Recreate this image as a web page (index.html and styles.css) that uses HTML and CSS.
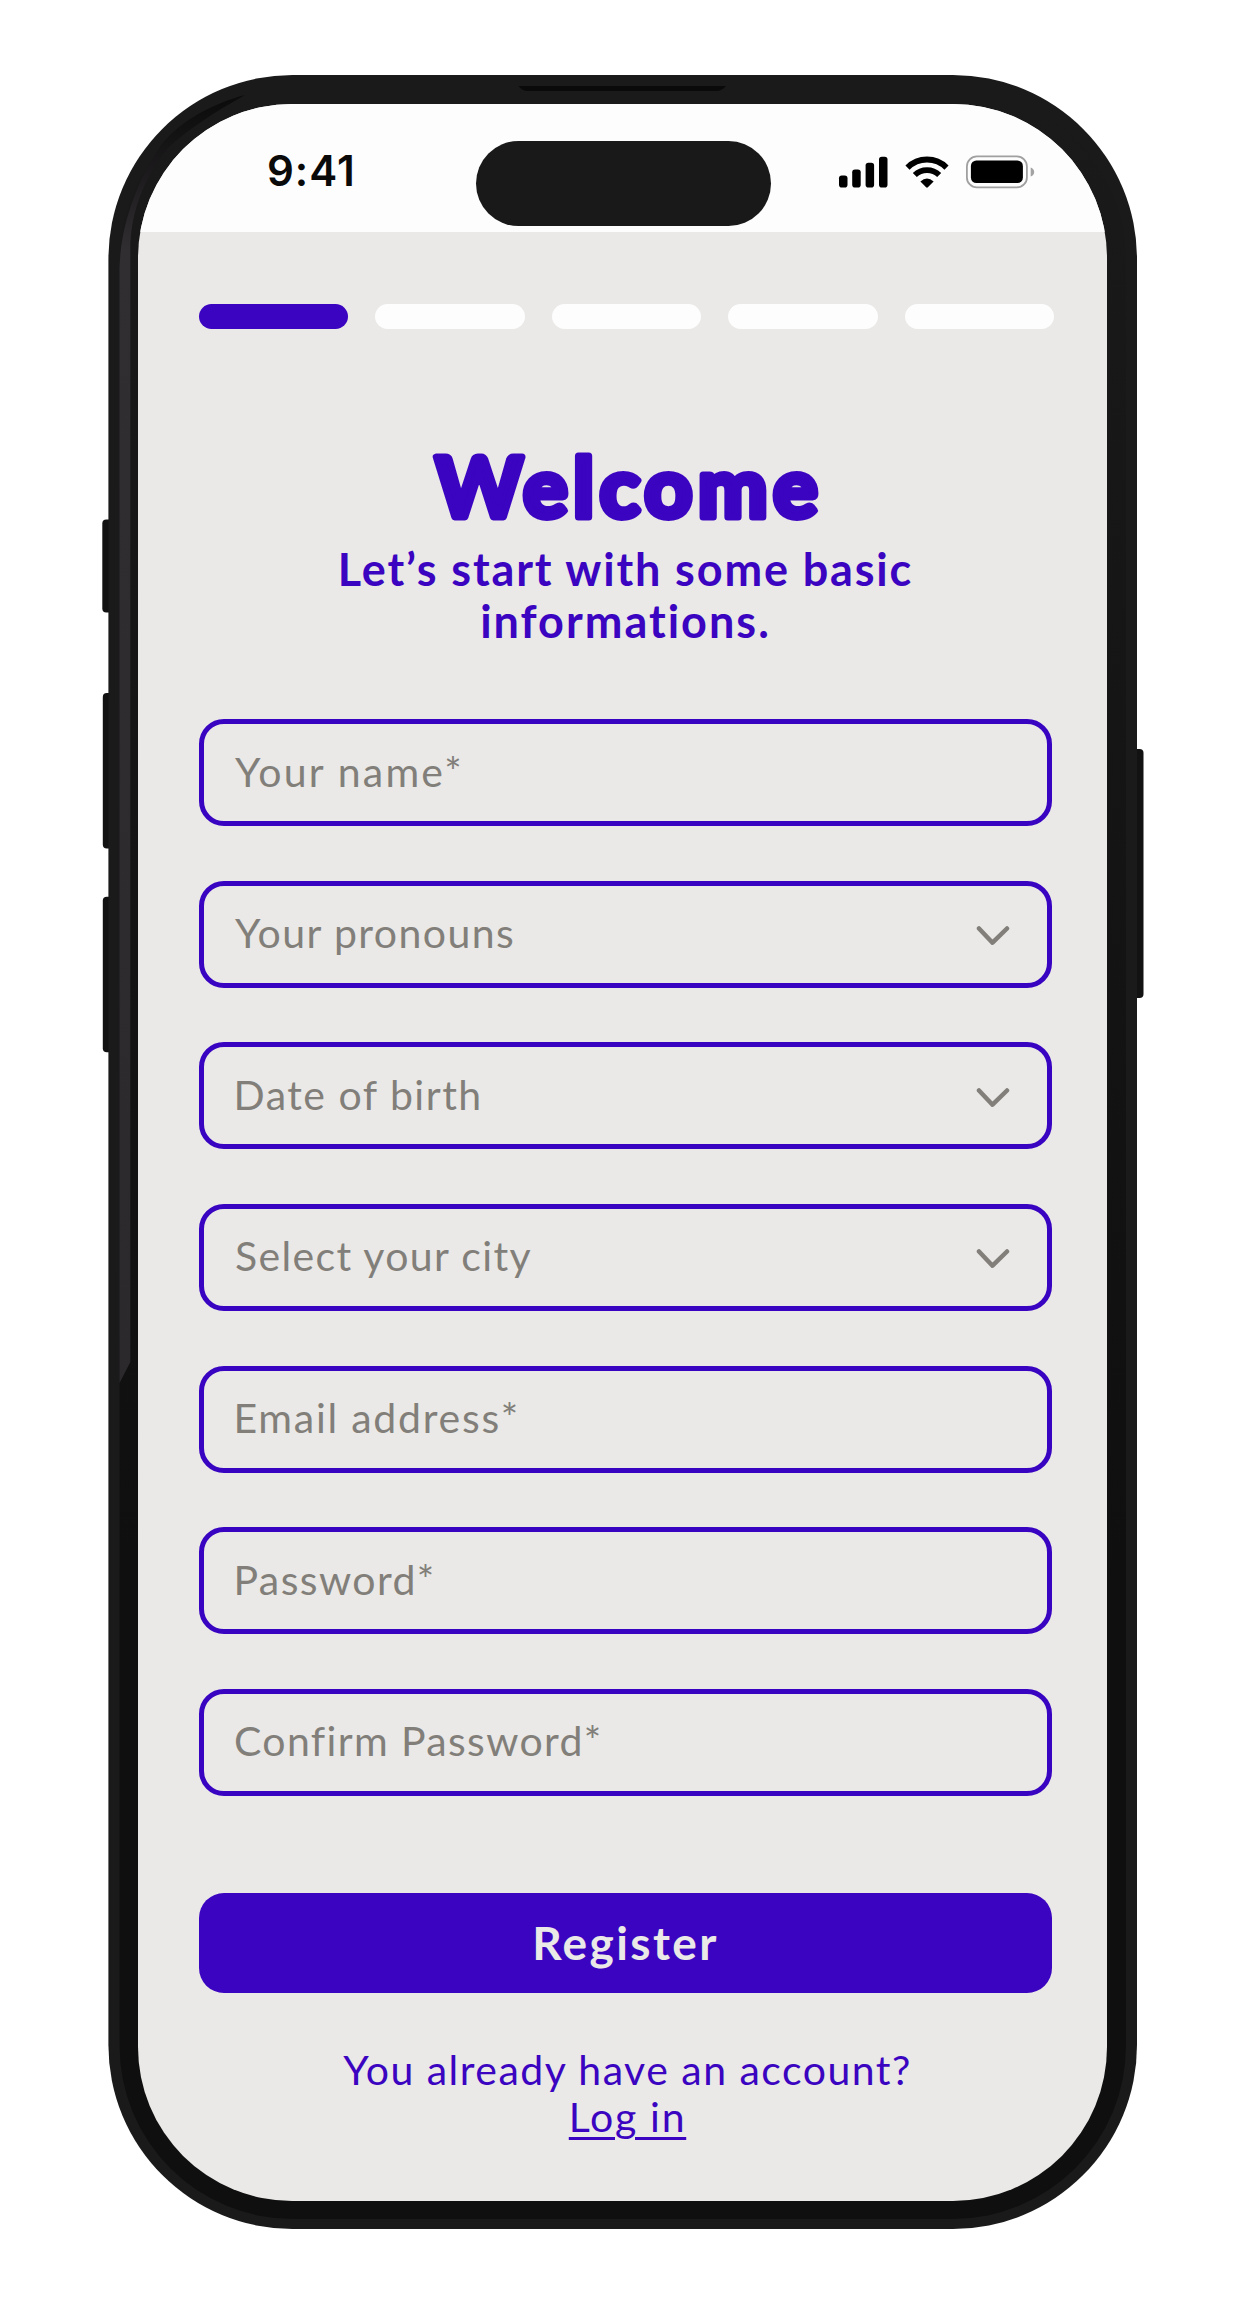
FILE: index.html
```
<!DOCTYPE html>
<html lang="en">
<head>
  <meta charset="utf-8">
  <title>Welcome – Register</title>
  <link rel="stylesheet" href="styles.css">
</head>
<body>
  <div class="phone">
    <svg class="bezel" viewBox="0 0 1252 2318" aria-hidden="true">
      <defs>
        <linearGradient id="shine" x1="0" y1="95" x2="0" y2="1383" gradientUnits="userSpaceOnUse">
          <stop offset="0" stop-color="#0b0b0b"/>
          <stop offset=".06" stop-color="#1c1a1c"/>
          <stop offset=".12" stop-color="#312e32"/>
          <stop offset="1" stop-color="#2c292d"/>
        </linearGradient>
        <linearGradient id="face" x1="0" y1="86" x2="0" y2="2219" gradientUnits="userSpaceOnUse">
          <stop offset="0" stop-color="#1a1a1a"/>
          <stop offset=".3" stop-color="#151515"/>
          <stop offset=".7" stop-color="#0f0f0f"/>
        </linearGradient>
      </defs>
      <g fill="#121212">
        <rect x="102.3" y="519.5" width="14" height="93" rx="4"/>
        <rect x="102.8" y="693" width="14" height="155.5" rx="4"/>
        <rect x="102.8" y="896.8" width="14" height="155.5" rx="4"/>
        <rect x="1130" y="749" width="13.5" height="249" rx="4"/>
      </g>
      <rect x="108.4" y="75" width="1028.6" height="2154" rx="184" fill="#1a1a1a"/>
      <rect x="119.5" y="86" width="1006.5" height="2133" rx="173" fill="url(#face)"/>
      <path d="M119.5 1383V268C121 218 141 176 161 145C182 119 215 103 245 95C213 113 188 130 170 146C146 174 130.3 210 130.3 250V1362Z" fill="url(#shine)"/>
      <path d="M518.5 86H726Q722 91 716 91H528Q522 91 518.5 86Z" fill="#0a0a0a"/>
    </svg>

    <main class="screen">
      <header class="status">
        <span class="time">9:41</span>
        <span class="island"></span>
        <svg class="indicators" viewBox="0 0 200 34" aria-hidden="true">
          <rect x="1" y="20.5" width="8.5" height="12" rx="2.8"/>
          <rect x="14.2" y="14.5" width="8.5" height="18" rx="2.8"/>
          <rect x="27.6" y="7.8" width="8.5" height="24.7" rx="2.8"/>
          <rect x="41" y="1.8" width="8.5" height="30.7" rx="2.8"/>
          <path d="M69.5 12.6A27.5 27.5 0 0 1 108.5 12.6" fill="none" stroke="#000" stroke-width="5.8"/>
          <path d="M76.8 20A17.5 17.5 0 0 1 101.2 20" fill="none" stroke="#000" stroke-width="5.8"/>
          <path d="M82.4 26.4Q89 20.4 95.6 26.4L89.9 32.3Q89 33 88.1 32.3Z"/>
          <rect x="128.9" y="1.4" width="60" height="31" rx="10" fill="none" stroke="#a0a0a0" stroke-width="1.8"/>
          <rect x="132.9" y="5.5" width="52" height="22.5" rx="5.5"/>
          <path d="M192.7 12.5Q196.2 14 196.2 17T192.7 21.5Z" fill="#a3a3a3"/>
        </svg>
      </header>

      <div class="content">
        <div class="progress">
          <span class="step active"></span><span class="step"></span><span class="step"></span><span class="step"></span><span class="step"></span>
        </div>

        <h1 class="title">
          <svg class="wordmark" viewBox="0 -20 400 120" role="img" aria-label="Welcome">
            <text x="9.5" y="77" textLength="382">Welcome</text>
          </svg>
        </h1>
        <p class="subtitle">Let’s start with some basic<br><span class="second">informations.</span></p>

        <form class="form">
          <div class="field"><span class="ph-name">Your name*</span></div>
          <div class="field"><span class="ph-pronouns">Your pronouns</span><svg class="chevron" viewBox="0 0 34 22" aria-hidden="true"><path d="M3 3.5L16.5 17.7L31 3.5"/></svg></div>
          <div class="field"><span class="ph-birth">Date of birth</span><svg class="chevron" viewBox="0 0 34 22" aria-hidden="true"><path d="M3 3.5L16.5 17.7L31 3.5"/></svg></div>
          <div class="field"><span class="ph-city">Select your city</span><svg class="chevron" viewBox="0 0 34 22" aria-hidden="true"><path d="M3 3.5L16.5 17.7L31 3.5"/></svg></div>
          <div class="field"><span class="ph-email">Email address*</span></div>
          <div class="field"><span class="ph-password">Password*</span></div>
          <div class="field"><span class="ph-confirm">Confirm Password*</span></div>
          <button class="register" type="button">Register</button>
        </form>

        <p class="account">You already have an account?<br><a class="login" href="#">Log in</a></p>
      </div>
    </main>
  </div>
</body>
</html>
```
FILE: styles.css
```
* {
  box-sizing: border-box;
}

body {
  margin: 0;
  background: #fff;
  font-family: Lato, "Open Sans", sans-serif;
}

.phone {
  position: relative;
  width: 1252px;
  height: 2318px;
  padding: 104px 145px 117px 138px;
}

.bezel {
  position: absolute;
  inset: 0;
  width: 100%;
  height: 100%;
}

.screen {
  position: relative;
  height: 2097px;
  overflow: hidden;
  border-radius: 154px;
  background: #eae9e7;
}

/* Status bar */
.status {
  display: flex;
  align-items: flex-start;
  height: 128px;
  background: #fdfdfd;
}

.time {
  width: 207px;
  margin: 41px 0 0 129px;
  font: 600 42px/52px Inter, sans-serif;
  letter-spacing: 1px;
  color: #0a0a0a;
}

.island {
  width: 295px;
  height: 85px;
  margin: 37px 0 0 1.7px;
  border-radius: 43px;
  background: #191919;
}

.indicators {
  width: 200px;
  height: 34px;
  margin: 50.5px 0 0 67.3px;
}

.content {
  padding: 72px 55px 0 61px;
}

/* Step indicator */
.progress {
  display: flex;
  gap: 27px;
  width: 855.4px;
}

.step {
  flex: 1;
  height: 25px;
  border-radius: 12.5px;
  background: #fdfdfd;
}

.active {
  background: #3b04c0;
}

/* Heading */
.title {
  margin: 91px 0 0;
  line-height: 0;
  text-align: center;
}

.wordmark {
  width: 400px;
  height: 120px;
}

.wordmark text {
  fill: #3b04c0;
  stroke: #3b04c0;
  stroke-width: 7px;
  stroke-linejoin: round;
  font: 700 83px Lato, sans-serif;
}

.subtitle {
  margin: 2.5px 0 0;
  font-size: 45px;
  font-weight: 700;
  line-height: 52.7px;
  letter-spacing: 1.85px;
  text-align: center;
  color: #3b04c0;
}

.second {
  letter-spacing: 2px;
}

/* Form */
.form {
  display: flex;
  flex-direction: column;
  gap: 54.6px;
  margin-top: 71.3px;
}

.field {
  display: flex;
  align-items: center;
  justify-content: space-between;
  height: 107px;
  padding: 0 37.5px 3px 31px;
  border: 5px solid #3803c1;
  border-radius: 25px;
  font-size: 41px;
  color: #827f7a;
}

.ph-name { letter-spacing: 2.2px; }
.ph-pronouns { letter-spacing: 1.43px; }
.ph-birth { margin-left: -1.5px; letter-spacing: 1.5px; }
.ph-city { letter-spacing: 1.35px; }
.ph-email { margin-left: -1.5px; letter-spacing: 1.75px; }
.ph-password { margin-left: -1.5px; letter-spacing: 1.4px; }
.ph-confirm { margin-left: -1px; letter-spacing: 1.35px; }

.chevron {
  width: 34px;
  height: 22px;
  margin-top: 7px;
  fill: none;
  stroke: #827f7a;
  stroke-width: 4.5px;
  stroke-linecap: round;
  stroke-linejoin: round;
}

.register {
  height: 100px;
  margin-top: 42.4px;
  padding: 0 0 1px;
  border: 0;
  border-radius: 25px;
  background: #3b04c0;
  color: #eae9e7;
  font: 700 46px Lato, sans-serif;
  letter-spacing: 2.4px;
}

.account {
  margin: 53px -4px 0 0;
  font-size: 41px;
  line-height: 47.5px;
  letter-spacing: 1.48px;
  text-align: center;
  color: #3b04c0;
}

.login {
  color: inherit;
  letter-spacing: 1.7px;
  text-decoration-thickness: 2.5px;
  text-underline-offset: 5px;
}
```
